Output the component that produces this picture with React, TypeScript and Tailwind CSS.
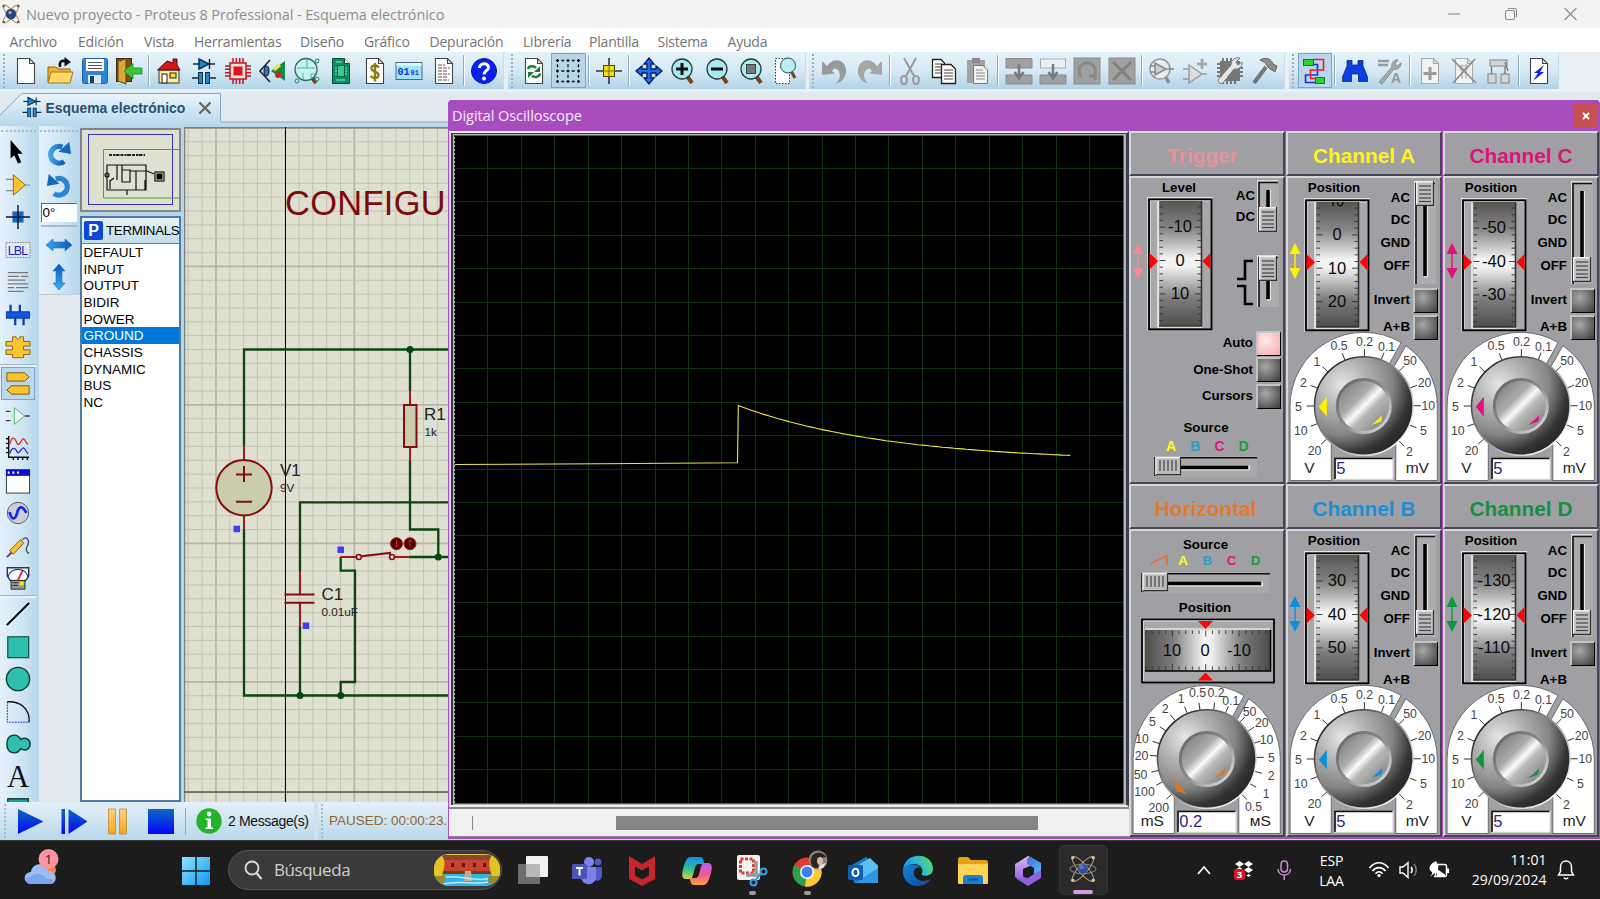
import React from "react";

/* ---------- toolbar icons, drawn on a 28 x 28 grid ---------- */

const Page = ({ fill = "#fff", stroke = "#444" }: { fill?: string; stroke?: string }) => (
  <path d="M5.500 1.500H17.500L22.500 6.500V26.500H5.500ZM17.500 1.500V6.500H22.500" fill={fill} stroke={stroke} strokeWidth="1.1" />
);

const Lens = ({ children }: { children?: React.ReactNode }) => (
  <>
    <path d="M18 19L23 26" stroke="#7a4412" strokeWidth="4" />
    <circle cx="13" cy="12" r="10" fill="#aee9ee" stroke="#1f3d3f" strokeWidth="1.3" />
    {children}
  </>
);

const icons: Record<string, React.ReactNode> = {
  new: <Page />,
  open: (
    <>
      <path d="M2 10H10L12 12H24V25H2Z" fill="#f0b429" stroke="#8a6412" strokeWidth="1" />
      <path d="M5 15H27L24 26H2Z" fill="#ffd766" stroke="#a0761c" strokeWidth="1" />
      <path d="M14 10C13 4 16 3 20 4.500" fill="none" stroke="#111" strokeWidth="2.600" />
      <path d="M18.500 0L25 5L18.500 9.500Z" fill="#111" />
    </>
  ),
  save: (
    <>
      <rect x="1.500" y="1.500" width="25" height="25" rx="2" fill="#2b86d9" stroke="#1a5fa3" />
      <rect x="5" y="2" width="18" height="12" fill="#fff" />
      <path d="M7 5.500H21M7 8.500H21M7 11.500H21" stroke="#555" />
      <rect x="7" y="18" width="13" height="8.500" fill="#dfe9f2" />
      <rect x="9" y="19" width="4" height="7" fill="#1d3f66" />
    </>
  ),
  exit: (
    <>
      <rect x="1.500" y="1.500" width="15" height="23" fill="#7b5518" stroke="#3f2c0a" />
      <path d="M5 4L11 1.500V27L3 24V3Z" fill="#dba53b" stroke="#5e430f" />
      <path d="M27 11V17H18V22L9 14L18 6.500V11Z" fill="#3cc43a" stroke="#1d8a28" strokeWidth=".8" />
    </>
  ),
  home: (
    <>
      <rect x="4" y="13" width="20" height="13" fill="#ffef9a" stroke="#333" />
      <path d="M2.500 13L12 4L18 6V2H22V8L25 13Z" fill="#d3151c" stroke="#5b0a0a" />
      <rect x="7" y="17" width="5" height="9" fill="#fff" stroke="#222" />
      <rect x="15" y="16" width="6" height="5" fill="#f7dd38" stroke="#222" />
    </>
  ),
  schematic: (
    <>
      <path d="M3 7H25" stroke="#223" strokeWidth="1.500" />
      <path d="M9 2V12L19 7ZM19.500 2V12" fill="#1c86d8" stroke="#10304c" strokeWidth="1.500" />
      <path d="M2 21H9M19 21H26" stroke="#223" strokeWidth="1.500" />
      <rect x="8.500" y="15.500" width="4" height="11" fill="#1c86d8" stroke="#10304c" />
      <rect x="15.500" y="15.500" width="4" height="11" fill="#1c86d8" stroke="#10304c" />
    </>
  ),
  chip: (
    <>
      <path d="M9 1V27M12.300 1V27M15.700 1V27M19 1V27M1 9H27M1 12.300H27M1 15.700H27M1 19H27" stroke="#c4161c" strokeWidth="1.500" />
      <rect x="6" y="6" width="16" height="16" fill="#f6dede" stroke="#c4161c" strokeWidth="1.500" />
      <rect x="9.500" y="9.500" width="9" height="9" fill="#d9171d" />
    </>
  ),
  visual: (
    <>
      <path d="M12 3L2 14L12 25" fill="none" stroke="#223" strokeWidth="1.600" />
      <ellipse cx="8.500" cy="14" rx="2.500" ry="5" fill="#2b74b8" stroke="#112" />
      <path d="M27 4V24L13 14Z" fill="#128a45" />
      <path d="M16 13L22 8" stroke="#f0e23a" strokeWidth="3" />
      <circle cx="20" cy="18" r="3" fill="#d92222" />
    </>
  ),
  explorer: (
    <>
      <path d="M18 19L23 26" stroke="#7a4412" strokeWidth="4" />
      <circle cx="13" cy="12.500" r="11" fill="#c9f2ef" stroke="#2d6f68" strokeWidth="1.300" />
      <path d="M4 11H14V3M14 11H22M10 22V16M18 21V17H23" fill="none" stroke="#3fb7a4" />
      <circle cx="24" cy="4" r="2" fill="#bfeee8" stroke="#267d6c" />
      <circle cx="4" cy="24" r="2" fill="#bfeee8" stroke="#267d6c" />
      <circle cx="24" cy="22" r="2" fill="#bfeee8" stroke="#267d6c" />
    </>
  ),
  pcb: (
    <>
      <path d="M5.500 1.500H17.500L22.500 6.500V26.500H5.500Z" fill="#0d8f63" stroke="#0a4a36" />
      <path d="M17.500 1.500V6.500H22.500" fill="#fff" stroke="#333" />
      <rect x="10.500" y="8.500" width="7" height="11" fill="#3ec69a" stroke="#063" />
      <path d="M8 11H10M8 14H10M8 17H10M18 11H20M18 14H20M18 17H20M9 23H18M9 5H15" stroke="#7ff0c9" />
    </>
  ),
  bom: (
    <>
      <Page />
      <path d="M18 10.500C15 7 9.500 8.500 10.500 12C11.500 15.500 18 14 17.500 18.500C17 22 11.500 21.500 9.500 19M14 6V24.500" fill="none" stroke="#8f7a06" strokeWidth="2.300" />
    </>
  ),
  code: (
    <>
      <rect x="1" y="5.500" width="26" height="17" fill="#9fe6f4" stroke="#567" />
      <rect x="1.500" y="6" width="25" height="3" fill="#d7f6fb" />
      <g fontFamily="Liberation Mono, monospace" fontWeight="700" fill="#1033d8">
        <text x="2.500" y="18" fontSize="10">01</text>
        <text x="15.500" y="18" fontSize="7">01</text>
      </g>
    </>
  ),
  notes: (
    <>
      <Page />
      <path d="M8 8H15M8 11H20M8 14H18M8 17H20M8 20H17M8 23H19" stroke="#555" strokeDasharray="4 1" />
    </>
  ),
  help: (
    <>
      <circle cx="14" cy="14" r="12.500" fill="#0b1ff0" stroke="#0a16a0" />
      <path d="M9.500 11C9.500 5.500 18.500 5.500 18.500 10.500C18.500 13.500 14 14 14 17.500" fill="none" stroke="#fff" strokeWidth="3" />
      <circle cx="14" cy="21.500" r="1.900" fill="#fff" />
    </>
  ),
  refresh: (
    <>
      <Page />
      <path d="M8 12C9 8.500 14 8.500 16 11M20 16.500C19 20.500 14 21 12 18.500" fill="none" stroke="#15803a" strokeWidth="2.500" />
      <path d="M20 9V15H14ZM8 21V15H14Z" fill="#15803a" />
    </>
  ),
  grid: (
    <path d="M2 3.500H26M2 14H26M2 24.500H26M3.500 2V26M14 2V26M24.500 2V26" stroke="#111" strokeWidth="1.300" strokeDasharray="3 2.250" />
  ),
  origin: (
    <>
      <path d="M14 1V27M1 14H27" stroke="#333" strokeWidth="1.600" />
      <rect x="8.500" y="8.500" width="11" height="11" fill="#f5dc10" stroke="#4a4200" />
      <path d="M14 8V20M8 14H20" stroke="#7a6b00" />
    </>
  ),
  pan: (
    <path d="M14 1L19 7H16V12H21V9L27 14L21 19V16H16V21H19L14 27L9 21H12V16H7V19L1 14L7 9V12H12V7H9Z" fill="#1673f0" stroke="#0a1660" strokeWidth="1.300" />
  ),
  zoomin: <Lens><path d="M13 6V18M7 12H19" stroke="#111" strokeWidth="3" /></Lens>,
  zoomout: <Lens><path d="M7 12H19" stroke="#111" strokeWidth="3" /></Lens>,
  zoomall: <Lens><rect x="8.500" y="7.500" width="9" height="9" fill="#777" stroke="#444" /></Lens>,
  zoomarea: (
    <>
      <rect x="3.500" y="1.500" width="14" height="25" fill="#fff" stroke="#333" strokeDasharray="1.500 1.500" />
      <path d="M19 14L23 21" stroke="#7a4412" strokeWidth="3" />
      <circle cx="16" cy="8.500" r="7.500" fill="#b6eef2" stroke="#1f4d50" />
    </>
  ),
  undo: <path d="M1 4L6 9C12 0 24 2 25 13C25.500 20 21 25 15 26.500C21 21 20 12 13 11.500L11 14L14 16.500L1 18Z" fill="#9a9a9a" />,
  redo: <path d="M27 4L22 9C16 0 4 2 3 13C2.500 20 7 25 13 26.500C7 21 8 12 15 11.500L17 14L14 16.500L27 18Z" fill="#a6a6a6" />,
  cut: (
    <g fill="none" stroke="#999" strokeWidth="2">
      <path d="M8 1L18 19M20 1L10 19" />
      <ellipse cx="8" cy="23" rx="3" ry="4" />
      <ellipse cx="20" cy="23" rx="3" ry="4" />
    </g>
  ),
  copy: (
    <>
      <path d="M2.500 2.500H11L14.500 6V20.500H2.500Z" fill="#fff" stroke="#222" strokeWidth="1.300" />
      <path d="M5 7H12M5 10H12M5 13H12M5 16H12" stroke="#444" />
      <path d="M11.500 7.500H21L25.500 12V26.500H11.500Z" fill="#fff" stroke="#222" strokeWidth="1.300" />
      <path d="M14 13H23M14 16H23M14 19H23M14 22H23" stroke="#444" />
    </>
  ),
  paste: (
    <>
      <rect x="3" y="3" width="18" height="23" fill="#a3a3a3" />
      <rect x="8" y="1" width="8" height="5" fill="#8a8a8a" />
      <path d="M9.500 8.500H19L23.500 13V26.500H9.500Z" fill="#f2f2f2" stroke="#777" />
      <path d="M12 13H19M12 16H21M12 19H21M12 22H21" stroke="#888" />
    </>
  ),
  blockcopy: (
    <>
      <path d="M1 1.500H27V11H1ZM1 18H27V27H1Z" fill="#a0a0a0" stroke="#8c8c8c" />
      <path d="M14 7V20M9.500 15L14 21L18.500 15" stroke="#7a7a7a" strokeWidth="2.600" fill="none" />
    </>
  ),
  blockmove: (
    <>
      <rect x="1.500" y="2" width="25" height="9" fill="#e9f1f7" stroke="#aaa" />
      <path d="M1 18H27V27H1Z" fill="#a0a0a0" stroke="#8c8c8c" />
      <path d="M14 7V20M9.500 15L14 21L18.500 15" stroke="#7a7a7a" strokeWidth="2.600" fill="none" />
    </>
  ),
  blockrotate: (
    <>
      <rect x="1" y="1" width="26" height="26" fill="#a0a0a0" stroke="#8c8c8c" />
      <path d="M8 20C2 8 14 2 20 8C24 13 22 18 20 20M16 19H22V23" fill="none" stroke="#888" strokeWidth="3" />
    </>
  ),
  blockdelete: (
    <>
      <rect x="1" y="1" width="26" height="26" fill="#a0a0a0" stroke="#8c8c8c" />
      <path d="M5 5L23 23M23 5L5 23" stroke="#808080" strokeWidth="3" />
    </>
  ),
  pick: (
    <>
      <path d="M17 19L21 26" stroke="#8a8a8a" strokeWidth="3.500" />
      <circle cx="12" cy="12" r="10" fill="#e9edf0" stroke="#999" strokeWidth="1.500" />
      <path d="M7 6V18L18 12ZM2 9H7M2 15H7M18 12H26" fill="#ccc" stroke="#888" strokeWidth="1.500" />
    </>
  ),
  make: (
    <>
      <path d="M7 8V26L20 17ZM1 12H7M1 22H7M20 17H25" fill="#ddd" stroke="#999" strokeWidth="1.400" />
      <path d="M20 2V12M15 7H25" stroke="#aaa" strokeWidth="3" />
    </>
  ),
  package: (
    <>
      <rect x="4" y="4" width="20" height="20" fill="#777" />
      <path d="M7 1V4M11 1V4M15 1V4M19 1V4M7 24V27M11 24V27M15 24V27M19 24V27M1 7H4M1 11H4M1 15H4M1 19H4M24 11H27M24 15H27M24 19H27" stroke="#555" strokeWidth="1.500" />
      <path d="M2 23L15 8C15 2 20 0 24 1L20 5L22 8L26 5C27 10 22 13 18 12L7 26Q3 28 2 23Z" fill="#e6e6e6" stroke="#777" />
    </>
  ),
  hammer: (
    <>
      <path d="M3 26L15 10" stroke="#777" strokeWidth="4" />
      <path d="M9 3C14 0 20 1 22 7L26 9L24 15L19 12L16 9C15 5 12 5 9 3Z" fill="#8c8c8c" stroke="#666" />
    </>
  ),
  autoroute: (
    <>
      <path d="M12 7.500H16.500V18H4.500V25.500H16" fill="none" stroke="#1d2be0" strokeWidth="1.600" />
      <path d="M12 2.500H22.500V13H9.500V21.500H16" fill="none" stroke="#f2182c" strokeWidth="1.600" />
      <rect x="2.500" y="2.500" width="10" height="6" fill="#28d42e" stroke="#173" />
      <rect x="14.500" y="20.500" width="9" height="6" fill="#28d42e" stroke="#173" />
    </>
  ),
  find: (
    <path d="M1.500 24.500V20L6 9V3.500H11V8H17V3.500H22V9L26.500 20V24.500H17.500V17H10.500V24.500Z" fill="#0c3fe0" stroke="#0b257a" strokeWidth=".8" />
  ),
  props: (
    <>
      <path d="M2 4H13M2 8H12" stroke="#9a9a9a" strokeWidth="2.500" />
      <path d="M3 25L16 10C15 5 19 2 22 3L19 7L21 9L25 6C25 11 21 13 18 12L6 27Z" fill="#aaa" stroke="#8b8b8b" />
      <text x="15" y="26" fontSize="14" fontWeight="700" fontFamily="Liberation Sans, sans-serif" fill="#999">A</text>
    </>
  ),
  addsheet: (
    <>
      <Page fill="#f2f2f2" stroke="#aaa" />
      <path d="M14 10V23M7.500 16.500H20.500" stroke="#9a9a9a" strokeWidth="3" />
    </>
  ),
  delsheet: (
    <>
      <Page fill="#f2f2f2" stroke="#aaa" />
      <path d="M9 9H18M9 12H18M12 7V22M16 7V22" stroke="#aaa" />
      <path d="M2 2L26 26M25 2L3 26" stroke="#888" strokeWidth="1.600" />
    </>
  ),
  sheets: (
    <g fill="#d5d5d5" stroke="#999" strokeWidth="1.300">
      <rect x="5" y="3" width="17" height="6" />
      <rect x="3" y="17" width="8" height="9" />
      <rect x="16" y="17" width="8" height="9" />
      <path d="M6.500 17V9.500M20 17V9.500M20 5L23 14" fill="none" stroke="#777" />
    </g>
  ),
  erc: (
    <>
      <Page />
      <path d="M19 8L9 16H13L8 24L19 15H15Z" fill="#1420e8" />
    </>
  ),
};

const Slot = ({ name, active }: { name: string; active?: boolean }) => (
  <div className={"flex h-[35px] w-[34.3px] shrink-0 items-center justify-center " + (active ? "border border-[#7aa5c8] bg-[#b9d7ea]" : "")}>
    <svg width="28" height="28" viewBox="0 0 28 28" className="shrink-0">{icons[name]}</svg>
  </div>
);

const Band = ({ items, cls, active }: { items: string; cls: string; active?: string }) => (
  <div className={"flex h-[37px] items-center border-r border-[#c9dcea] bg-linear-to-b from-[#e6f2f9] via-[#d6eaf5] to-[#b2d3e8] " + cls}>
    <div className="ml-[3px] h-[34px] w-0 border-l-2 border-dotted border-[#9fb0bd]" />
    <div className="w-[4px] shrink-0" />
    {items.split(" ").map((n, i) =>
      n === "|" ? (
        <div key={i} className="flex w-[6px] shrink-0 justify-center"><div className="h-[31px] w-[2px] border-l border-[#93abbc] bg-white" /></div>
      ) : (
        <Slot key={i} name={n} active={n === active} />
      ),
    )}
  </div>
);

const Atom = ({ size, dark }: { size: number; dark?: boolean }) => (
  <svg width={size} height={size} viewBox="0 0 30 30">
    <g fill="none" stroke={dark ? "#b9a47c" : "#b08a4a"} strokeWidth={dark ? 1 : 1.500}>
      <ellipse cx="15" cy="15" rx="17" ry="5" transform="rotate(50 15 15)" />
      <ellipse cx="15" cy="15" rx="17" ry="5" transform="rotate(-50 15 15)" />
      {dark && <ellipse cx="15" cy="15" rx="14" ry="5" stroke="#8b8fa8" />}
    </g>
    <circle cx="15" cy="15" r={dark ? 5 : 8} fill={dark ? "#2b4f9c" : "#26467e"} />
    <circle cx="13.500" cy="13" r="2.500" fill={dark ? "#4f78c4" : "#8fb0e0"} />
    <g fill={dark ? "#d9c48a" : "#5d5238"}>
      <circle cx="4" cy="3" r="1.800" /><circle cx="26" cy="3" r="1.800" /><circle cx="4" cy="27" r="1.800" /><circle cx="26" cy="27" r="1.800" />
    </g>
  </svg>
);

/* ---------- mode selector on the left ---------- */

const modes: React.ReactNode[] = [
  <path d="M6 1L19 16H13.500L17.500 25L14 26.500L10 17.500L6 21Z" fill="#000" />,
  <><path d="M1 8H9M1 20H9M20 14H27" stroke="#888" strokeWidth="1.300" /><path d="M9 3V25L22 14Z" fill="#fdc32d" stroke="#8a6a16" /></>,
  <><rect x="8" y="8" width="12" height="12" fill="#0f6cc4" /><path d="M14 1V27M1 14H27" stroke="#112" strokeWidth="1.500" /></>,
  <><rect x="1" y="6" width="26" height="16" fill="#dcebf7" stroke="#888" strokeDasharray="2 1" /><text x="3" y="19" fontSize="13.500" textLength="22" fontFamily="Liberation Sans, sans-serif" fill="#1a1ac8">LBL</text></>,
  <path d="M3 4H25M3 8H15M17 8H25M3 12H22M3 16H25M3 20H10M12 20H25M3 24H20" stroke="#777" strokeWidth="1.300" />,
  <><path d="M1.500 10.500H26.500V17.500H1.500Z" fill="#0f55e0" stroke="#093a9c" /><path d="M6 3V11M16 3V11M11 17V25M20 17V25" stroke="#0d3fb0" strokeWidth="2.500" /></>,
  <path d="M8 3H12C12 6 16 6 16 3H20V8H27V13H20V17H27V22H20V25.500H8V22H1V17H8V13H1V8H8Z" fill="#fdc32d" stroke="#7d6218" />,
  <><path d="M2 3H21L26 7.500L21 12H2Z" fill="#fdc32d" stroke="#6d5514" /><path d="M26 17H7L2 21.500L7 26H26Z" fill="#fdc32d" stroke="#6d5514" /></>,
  <><path d="M1 9H6M1 19H6M21 14H27" stroke="#444" strokeWidth="1.500" /><path d="M10 5V23L21 14Z" fill="#eaf6f2" stroke="#4db46c" /></>,
  <><path d="M4 1V24H26M1 4H4M1 9H4M1 14H4M1 19H4M9 24V27M14 24V27M19 24V27M24 24V27" fill="none" stroke="#111" strokeWidth="1.500" /><path d="M5 10C8 -1 11 4 13 9C15 14 18 3 20 4C22 5 22 9 25 10" fill="none" stroke="#e02626" strokeWidth="1.400" /><path d="M5 20C8 12 11 14 13 18C15 22 18 13 20 14C22 15 23 19 25 20" fill="none" stroke="#2222d8" strokeWidth="1.400" /></>,
  <><rect x="1.500" y="2" width="25" height="25" fill="#fff" stroke="#333" /><rect x="1" y="1.500" width="26" height="7" fill="#0a12c8" /><path d="M3 5H5M8 5H10M13 5H15" stroke="#fff" strokeWidth="2.500" /></>,
  <><circle cx="14" cy="14" r="11.500" fill="#ccd0d8" stroke="#555" /><path d="M5 13C7 22 11 22 13 14C15 6 19 6 23 14" fill="none" stroke="#1428e8" strokeWidth="3" /></>,
  <><path d="M2 26L7 21" stroke="#555" strokeWidth="2" /><path d="M5 19L17 7L20 11L9 23Z" fill="#fdc32d" stroke="#6d5514" /><path d="M19 7C24 2 27 9 24 14C22 18 23 21 26 22" fill="none" stroke="#444" strokeWidth="1.300" /></>,
  <><path d="M2.500 3H25.500V12L22 17H6L2.500 12Z" fill="#fff" stroke="#333" strokeWidth="1.500" /><path d="M3 13C6 2 22 2 25 13" fill="none" stroke="#2030e0" strokeWidth="1.500" /><path d="M14 16L19 6" stroke="#e02020" strokeWidth="2" /><rect x="6.500" y="16.500" width="15" height="9.500" fill="#999" stroke="#222" /><path d="M8 19H14M8 22H14" stroke="#222" /><rect x="16" y="18" width="4" height="4" fill="#f5e42a" /></>,
  <path d="M2 26L26 2" stroke="#000" strokeWidth="2.200" />,
  <rect x="3" y="3" width="22.500" height="22.500" fill="#2fbfb0" stroke="#134d47" strokeWidth="1.300" />,
  <circle cx="14" cy="14" r="12.500" fill="#2fbfb0" stroke="#0e3a36" strokeWidth="1.500" />,
  <><path d="M2.500 3V25H26" fill="none" stroke="#2222d0" strokeDasharray="2 1" /><path d="M2.500 3C16 2 27 10 26 25" fill="none" stroke="#111" strokeWidth="1.500" /></>,
  <path d="M17 9C22 6 27 9 27 14C27 20 22 22 17 19C13 26 2 25 2 14C2 3 13 2 17 9Z" fill="#2fbfb0" stroke="#0e3a36" strokeWidth="1.500" />,
  <text x="14" y="25" textAnchor="middle" fontSize="33" fontFamily="Liberation Serif, serif" fill="#111">A</text>,
  <><rect x="3" y="3" width="22" height="22" fill="#17a58e" stroke="#0e3a36" strokeWidth="1.500" /><path d="M8 8H20" stroke="#063" strokeWidth="1.500" /></>,
];

const ModeBar = () => (
  <div className="flex w-[39px] shrink-0 flex-col items-center overflow-hidden bg-linear-to-r from-[#e4f1fa] via-[#d2e7f4] to-[#b4d6ec] pr-[3px]">
    <div className="mt-[4px] mb-[4px] w-[35px] border-t-2 border-dotted border-[#a9bccb]" />
    {modes.map((m, i) => (
      <React.Fragment key={i}>
        {(i === 7 || i === 14) && <div className="h-[3.500px] w-full shrink-0 border-t border-[#9fb3c3] bg-[#e8f2f9]" />}
        <div className={"flex h-[32.500px] w-[34px] shrink-0 items-center justify-center " + (i === 7 ? "border border-[#7aa5c8] bg-[#bcd9ec]" : "")}>
          <svg width="26" height="26" viewBox="0 0 28 28" className="overflow-visible">{m}</svg>
        </div>
      </React.Fragment>
    ))}
  </div>
);

const RotateBar = () => (
  <div className="flex w-[41px] shrink-0 flex-col bg-[#e1e9ef]">
    <div className="flex h-[169px] flex-col items-center border-b border-[#c2cfd9] bg-linear-to-r from-[#e4f1fa] via-[#d2e7f4] to-[#b4d6ec] pr-[2px]">
      <div className="mt-[4px] w-[38px] border-t-2 border-dotted border-[#a9bccb]" />
      <svg width="26" height="26" viewBox="0 0 28 28" className="mt-[9px]">
        <defs><linearGradient id="rot"><stop offset="0" stopColor="#3aa4e4" /><stop offset="1" stopColor="#0f5ab8" /></linearGradient></defs>
        <path d="M17.500 6.500A9 9 0 1 0 19.500 22" fill="none" stroke="url(#rot)" strokeWidth="5.500" />
        <path d="M25 1L27 14L13.500 11.500Z" fill="#1668bd" />
      </svg>
      <svg width="26" height="26" viewBox="0 0 28 28" className="mt-[6px]">
        <path d="M10.500 6.500A9 9 0 1 1 8.500 22" fill="none" stroke="#2c86d4" strokeWidth="5.500" />
        <path d="M3 1L1 14L14.500 11.500Z" fill="#1668bd" />
      </svg>
      <div className="mt-[4px] h-[19px] w-[36px] border-t border-l border-[#666] bg-white pl-px font-['Liberation_Sans'] text-[13.500px] leading-[18px] text-black">0°</div>
      <div className="mt-[3px] h-[2px] w-[36px] bg-[#a9bccb]" />
      <svg width="28" height="28" viewBox="0 0 28 28" className="mt-[4px]">
        <defs><linearGradient id="hr"><stop offset="0" stopColor="#35a8e8" /><stop offset="1" stopColor="#0d55c0" /></linearGradient></defs>
        <path d="M1 14L8 8V11H20V8L27 14L20 20V17H8V20Z" fill="url(#hr)" stroke="#1565b0" strokeWidth=".5" />
      </svg>
      <svg width="28" height="28" viewBox="0 0 28 28" className="mt-[4px]">
        <defs><linearGradient id="vr" x1="0" y1="0" x2="0" y2="1"><stop offset="0" stopColor="#0d55c0" /><stop offset="1" stopColor="#3fb0ec" /></linearGradient></defs>
        <path d="M14 1L20 8H17V20H20L14 27L8 20H11V8H8Z" fill="url(#vr)" stroke="#1565b0" strokeWidth=".5" />
      </svg>
    </div>
  </div>
);

const terminals = ["DEFAULT", "INPUT", "OUTPUT", "BIDIR", "POWER", "GROUND", "CHASSIS", "DYNAMIC", "BUS", "NC"];

const Picker = () => (
  <div className="flex w-[104px] shrink-0 flex-col bg-[#b7d6ea] pr-[3px]">
    <div className="mt-[2px] h-[84px] border-2 border-[#7d8790] bg-[#dfe0d0]">
      <svg width="97" height="80" viewBox="82 130 97 80">
        <rect x="88.500" y="134.500" width="84" height="70" fill="none" stroke="#3a32b8" />
        <path d="M180 149.500H103.500V198H180" fill="none" stroke="#35b035" />
        <path d="M109 155H145" stroke="#222" strokeWidth="2" strokeDasharray="3 1 2 .5 4 1" />
        <g fill="none" stroke="#111" strokeWidth="1.200">
          <path d="M107 165H146V190H107ZM110 180V189M117 165V180M122 165V175M127 170H130V182H122V170ZM130 171H147L154 174M136 171V190M145 180V190M127 190V195M110 181L114 178" />
          <circle cx="107" cy="175" r="2" />
          <rect x="155" y="172" width="9" height="9" />
        </g>
        <rect x="156.500" y="173.500" width="6" height="6" fill="#000" />
      </svg>
    </div>
    <div className="mt-[4px] flex flex-1 flex-col border-2 border-[#4d7ba3] bg-white">
      <div className="flex h-[26px] shrink-0 items-center overflow-hidden border-b border-[#4b8fc9] bg-linear-to-b from-[#e6f2fa] to-[#bfdcee]">
        <div className="ml-[2px] flex h-[19px] w-[19px] shrink-0 items-center justify-center rounded-[2px] bg-[#0c47d8] font-['Liberation_Sans'] text-[16px] font-bold text-white">P</div>
        <div className="ml-[3px] font-['Liberation_Sans'] text-[13.300px] tracking-[-0.300px] text-black">TERMINALS</div>
      </div>
      {terminals.map((t) => (
        <div key={t} className={"h-[16.670px] shrink-0 pl-[1.500px] font-['Liberation_Sans'] text-[13.500px] leading-[17px] " + (t === "GROUND" ? "bg-[#0078d7] text-white" : "text-black")}>{t}</div>
      ))}
    </div>
  </div>
);

/* ---------- schematic ---------- */

const Schematic = () => {
  const xs = Array.from({ length: 20 }, (_, i) => 188.300 + i * 13.840);
  const ys = Array.from({ length: 50 }, (_, i) => 127.900 + i * 13.850);
  return (
    <svg width="264" height="677" viewBox="184 126 264 677" className="shrink-0 bg-[#dfe0d0]">
      {xs.map((x, i) => <path key={i} d={`M${x} 126V803`} stroke={i % 10 === 2 ? "#b3b4a2" : "#c3c4b5"} strokeWidth={i % 10 === 2 ? 1.700 : 1} />)}
      {ys.map((y, i) => <path key={i} d={`M184 ${y}H448`} stroke={i % 10 === 0 ? "#b3b4a2" : "#c3c4b5"} strokeWidth={i % 10 === 0 ? 1.700 : 1} />)}
      <path d="M184 126.500H448" stroke="#b9d6e8" strokeWidth="1.500" />
      <path d="M184 127.800H448M184.500 127V803" stroke="#7b7f86" strokeWidth="1.500" />
      <path d="M184 792H448" stroke="#55554c" strokeWidth="1.300" />
      <path d="M285.500 127V802" stroke="#000" />
      <text x="285" y="215.300" fontSize="34.400" letterSpacing=".35" fill="#7f0a0a" fontFamily="Liberation Sans, sans-serif">CONFIGU</text>
      <g fill="none" stroke="#0a470f" strokeWidth="2.300">
        <path d="M244 446V349.500H448M410 349.500V391M410 460V529.500H438.300V557M448 557H409M244 529V695.500H448M448 502.300H300V571M300 627V695.500M340.700 557V570.700H355V682H340.700V695.500" />
      </g>
      <g fill="#0a470f">
        <circle cx="410" cy="349.500" r="3.500" /><circle cx="438.300" cy="557" r="3.500" /><circle cx="300" cy="695.500" r="3.500" /><circle cx="340.700" cy="695.500" r="3.500" />
      </g>
      <g fill="none" stroke="#840c0c" strokeWidth="2">
        <path d="M244 445V460M244 515V530M410 391V405M410 447V461M300 571V594M300 603V627M340.700 557H356M395 557H410" stroke="#a31818" />
        <rect x="404" y="405" width="12.500" height="42" fill="#cbccae" />
        <circle cx="244" cy="487.700" r="27.700" fill="#cbccae" />
        <path d="M236 474.500H252M244 466V482M236 501.700H252M284.500 594.500H314.500M284.500 602.700H314.500M361.500 556.300L391 552.800M390 552.500V555" />
        <circle cx="358.800" cy="557" r="2.500" fill="#dfe0d0" strokeWidth="1.500" />
        <circle cx="392" cy="557" r="2.500" fill="#dfe0d0" strokeWidth="1.500" />
      </g>
      <circle cx="396.500" cy="543.700" r="6" fill="#4a0505" stroke="#b01414" />
      <circle cx="410" cy="543.700" r="6" fill="#4a0505" stroke="#b01414" />
      <path d="M396.500 540V547M394.500 545L396.500 547L398.500 545M410 547V540M408 542L410 540L412 542" stroke="#e02020" fill="none" />
      <path d="M233.500 525.800H240V532.300H233.500ZM337.500 546.500H344V553H337.500ZM302.700 622.500H309.200V629H302.700Z" fill="#4040f0" />
      <g fontFamily="Liberation Sans, sans-serif" fill="#222">
        <text x="280" y="475.500" fontSize="17">V1</text>
        <text x="280" y="491.500" fontSize="11.700">9V</text>
        <text x="424" y="420" fontSize="17">R1</text>
        <text x="424.500" y="436" fontSize="11.700">1k</text>
        <text x="321.500" y="599.500" fontSize="17">C1</text>
        <text x="321.500" y="616" fontSize="11.700">0.01uF</text>
      </g>
    </svg>
  );
};

/* ---------- oscilloscope controls ---------- */

const label = "font-['Liberation_Sans'] text-[13.300px] font-bold text-black whitespace-nowrap";

const Arrows = ({ color }: { color: string }) => (
  <svg width="12" height="36" viewBox="0 0 12 36" className="mt-[65px] ml-[1px] shrink-0">
    <path d="M6 10V26" stroke={color} strokeWidth="1.400" />
    <path d="M6 0L11.500 11H.5ZM6 36L11.500 25H.5Z" fill={color} />
  </svg>
);

const Wheel = ({ values, shift = 0, id }: { values: string[]; shift?: number; id: string }) => (
  <svg width="66" height="134" viewBox="0 0 66 134" className="shrink-0">
    <defs>
      <linearGradient id={id} x1="0" y1="0" x2="0" y2="1">
        <stop offset="0" stopColor="#585454" /><stop offset=".22" stopColor="#858585" /><stop offset=".46" stopColor="#f4f4f4" /><stop offset=".53" stopColor="#f0f0f0" /><stop offset=".78" stopColor="#7c7c7c" /><stop offset="1" stopColor="#504c4c" />
      </linearGradient>
      <clipPath id={id + "c"}><rect x="12" y="4" width="43" height="125" /></clipPath>
    </defs>
    <path d="M0 134V.7H66" fill="none" stroke="#e4e4e4" strokeWidth="1.400" />
    <rect x="2" y="2.300" width="62.500" height="130" fill="#a8a8aa" stroke="#000" strokeWidth="1.800" />
    <path d="M3.500 131V4H63" fill="none" stroke="#c9c9c9" />
    <path d="M11 4V130H55" fill="none" stroke="#e0e0e0" strokeWidth="2" />
    <rect x="12.300" y="4" width="42.500" height="125" fill={`url(#${id})`} />
    <path d="M54.500 4V129M12 129H55" stroke="#333" strokeWidth="1.600" />
    <g clipPath={`url(#${id}c)`}>
      {Array.from({ length: 22 }, (_, i) => {
        const y = 63.500 + shift + (i - 10) * 6.680;
        const w = i % 5 === 0 ? 6 : 3.500;
        return <path key={i} d={`M12.500 ${y}h${w}M54 ${y}h${-w}`} stroke="#333" strokeWidth=".9" />;
      })}
      {values.map((v, i) => (
        <text key={v + i} x="33" y={68.800 + shift + (i - 1) * 33.400} fontSize="16.500" textAnchor="middle" fontFamily="Liberation Sans, sans-serif" fill="#0a0a0a">{v}</text>
      ))}
      {shift > 0 && <path d="M29 4V8.300M33.500 4C33.500 9 39 9 39 4" fill="none" stroke="#111" strokeWidth="1.400" />}
    </g>
    <path d="M2.500 56V72.500L11 64.300ZM63.500 56V72.500L55.500 64.300Z" fill="#fb0606" />
  </svg>
);

const VSlider = ({ h, at }: { h: number; at: number }) => (
  <svg width="22" height={h} viewBox={`0 0 22 ${h}`} className="shrink-0">
    <rect width="22" height={h} fill="#acacae" />
    <path d={`M.7 ${h}V.7H21`} fill="none" stroke="#dcdcdc" strokeWidth="1.400" />
    <path d={`M2 ${h}V2.500H21`} fill="none" stroke="#111" strokeWidth="1.600" />
    <path d={`M11 10V${h - 8}`} stroke="#000" strokeWidth="3.500" />
    <path d={`M13.500 10V${h - 7}H10`} fill="none" stroke="#e8e8e8" />
    <rect x="2" y={at} width="18" height="25" fill="#bcbcbe" />
    <path d={`M2.700 ${at + 25}V${at + .7}H20`} fill="none" stroke="#f0f0f0" strokeWidth="1.400" />
    <path d={`M2 ${at + 24.300}H19.500V${at}`} fill="none" stroke="#333" strokeWidth="1.200" />
    {[5, 9, 13, 17, 20.500].map((d) => <path key={d} d={`M5 ${at + d}h12`} stroke="#444" strokeWidth="1.200" />)}
  </svg>
);

const HSlider = ({ w }: { w: number }) => (
  <svg width={w} height="21" viewBox={`0 0 ${w} 21`} className="block shrink-0">
    <rect width={w} height="21" fill="#a8a8aa" />
    <path d={`M1 20V1.700H${w}`} fill="none" stroke="#111" strokeWidth="1.600" />
    <path d={`M20 11.500H${w - 9}`} stroke="#000" strokeWidth="3.500" />
    <path d={`M20 14H${w - 7.500}V9`} fill="none" stroke="#e8e8e8" />
    <rect x="1.500" y="1" width="25" height="18" fill="#bcbcbe" />
    <path d="M2 19V1.500H26" fill="none" stroke="#f0f0f0" strokeWidth="1.400" />
    <path d="M2 18.700H26.500V1" fill="none" stroke="#333" strokeWidth="1.200" />
    {[6, 10, 14, 18, 22].map((d) => <path key={d} d={`M${d} 4v11`} stroke="#444" strokeWidth="1.200" />)}
  </svg>
);

const Push = ({ on }: { on?: boolean }) => (
  <div className={"h-[25px] w-[25px] shrink-0 border-t-2 border-r-[1.500px] border-b-[1.500px] border-l-2 border-t-[#c4c4c4] border-r-black border-b-black border-l-[#c4c4c4] bg-radial-[at_35%_35%] " + (on ? "from-[#fdeaea] to-[#f5a9ab]" : "from-[#a8a8a8] to-[#3a3a3a]")} />
);

const PushRow = ({ text, on, cls = "" }: { text: string; on?: boolean | null; cls?: string }) => (
  <div className={"flex items-center justify-end gap-[3px] " + cls}>
    <span className={label}>{text}</span>
    {on === null ? <div className="w-[25px] shrink-0" /> : <Push on={on} />}
  </div>
);

type Mark = [string, number, number];

const voltMarks: Mark[] = [
  ["0.5", -24.700, -60.300], ["0.2", 0.700, -65], ["0.1", 22.700, -60], ["1", -47, -44.700], ["2", -60.300, -23.300], ["5", -65.300, 0], ["10", -63, 24], ["20", -49.300, 44],
  ["50", 46.300, -45.700], ["20", 60.800, -23.700], ["10", 64.500, -0.300], ["5", 59.700, 24.700], ["2", 45.700, 45.300],
];

const timeMarks: Mark[] = [
  ["0.5", -9.300, -66.700], ["0.2", 9.300, -66.700], ["0.1", 24, -58.700], ["1", -25.700, -60.300], ["2", -41.700, -50.700], ["5", -54.300, -37.300], ["10", -64.700, -21], ["20", -65.300, -4], ["50", -66.300, 15.700], ["100", -62.300, 32.300], ["200", -48, 48],
  ["50", 42.700, -47.300], ["20", 55, -37], ["10", 59.700, -20], ["5", 64.700, -2], ["2", 64.300, 16.700], ["1", 59.300, 34], ["0.5", 46.700, 47.300],
];

const Dial = ({ marks, color, value, left, right, pointer, id }: { marks: Mark[]; color: string; value: string; left: string; right: string; pointer: string; id: string }) => (
  <svg width="153" height="151" viewBox="-75.800 -75 153 151" className="block shrink-0">
    <defs>
      <radialGradient id={id + "k"} cx=".28" cy=".28" r=".85">
        <stop offset="0" stopColor="#e6e6e6" /><stop offset=".3" stopColor="#b2b2b2" /><stop offset=".6" stopColor="#858585" /><stop offset=".82" stopColor="#333" /><stop offset="1" stopColor="#222" />
      </radialGradient>
      <linearGradient id={id + "i"} x1="0" y1="0" x2="1" y2="1">
        <stop offset=".1" stopColor="#808080" /><stop offset=".38" stopColor="#ababab" /><stop offset=".5" stopColor="#fafafa" /><stop offset=".6" stopColor="#b8b8b8" /><stop offset=".8" stopColor="#949494" /><stop offset="1" stopColor="#777" />
      </linearGradient>
      <linearGradient id={id + "r"} x1="0" y1="0" x2="1" y2="1">
        <stop offset=".1" stopColor="#1a1a1a" /><stop offset=".5" stopColor="#999" /><stop offset=".9" stopColor="#fff" />
      </linearGradient>
      <linearGradient id={id + "n"} x1="0" y1="0" x2="1" y2="1">
        <stop offset=".1" stopColor="#6a6a6a" /><stop offset=".5" stopColor="#8c8c8c" /><stop offset=".9" stopColor="#d4d4d4" />
      </linearGradient>
    </defs>
    <path d="M0 0L-32.500 38V74.500H-73.700V0A73.700 73.700 0 0 1 37.300 -63.500L26 -43Z" fill="#fff" stroke="#555" strokeWidth=".8" />
    <path d="M0 0L31.500 -41.500L42 -60.300A73.700 73.700 0 0 1 73.500 0V74.500H32V38Z" fill="#fff" stroke="#555" strokeWidth=".8" />
    {marks.map(([, x, y], i) => {
      const r = Math.hypot(x, y);
      return <path key={"t" + i} d={`M${(x / r) * 48} ${(y / r) * 48}L${(x / r) * 57} ${(y / r) * 57}`} stroke="#333" />;
    })}
    <g fontFamily="Liberation Sans, sans-serif" fill="#444" fontSize="12.300" textAnchor="middle">
      {marks.map(([t, x, y], i) => <text key={i} x={x} y={y + 4.500}>{t}</text>)}
    </g>
    <circle r="49.300" fill={`url(#${id}k)`} stroke={`url(#${id}r)`} strokeWidth="1.500" />
    <circle r="26.500" fill={`url(#${id}i)`} stroke={`url(#${id}n)`} strokeWidth="3" />
    <path d={pointer} fill={color} />
    <path d="M18.500 9L17.500 15.500L7.500 19L13 14.500Z" fill={color} />
    <rect x="-29.500" y="51.500" width="59" height="22" fill="#fff" />
    <path d="M-28.800 73V52.300H29" fill="none" stroke="#111" strokeWidth="1.700" />
    <path d="M-29 73.300H29.200V52" fill="none" stroke="#d6d6d6" />
    <g fontFamily="Liberation Sans, sans-serif" fill="#222" fontSize="15.500">
      <text x="-27.500" y="67.500" fontSize="16.500" fill="#2c2486">{value}</text>
      <text x="-54.500" y="66.500" textAnchor="middle">{left}</text>
      <text x="53.500" y="66.500" textAnchor="middle">{right}</text>
    </g>
  </svg>
);

const bevel = "border-t-2 border-l-2 border-r-2 border-b-2 border-t-[#d6d8d6] border-l-[#d6d8d6] border-r-[#45455a] border-b-[#45455a] bg-[#a0a0a4]";

const Section = ({ title, color, children }: { title: string; color: string; children: React.ReactNode }) => (
  <div className="flex h-[353px] w-[157px] flex-col pr-px">
    <div className={"flex h-[44.500px] shrink-0 items-center justify-center pt-[4px] font-['Liberation_Sans'] text-[20.800px] font-bold " + bevel}>
      <span className={color}>{title}</span>
    </div>
    <div className={"flex min-h-0 flex-1 flex-col " + bevel}>{children}</div>
  </div>
);

const Channel = ({ name, color, text, values, shift, at, paired }: { name: string; color: string; text: string; values: string[]; shift?: number; at: number; paired?: boolean }) => (
  <Section title={"Channel " + name} color={text}>
    <div className="flex h-[153.500px] shrink-0">
      <div className="w-[16px] shrink-0"><Arrows color={color} /></div>
      <div className="flex w-[66px] shrink-0 flex-col">
        <div className={"h-[20px] pr-[6px] text-center leading-[20px] " + label}>Position</div>
        <Wheel id={"w" + name} values={values} shift={shift} />
      </div>
      <div className="flex w-[68px] shrink-0 flex-col">
        <div className="flex h-[110px] shrink-0 justify-end gap-[4px] pt-[3px] pr-[2px]">
          <div className={"flex flex-col pt-[6px] text-right leading-[22.700px] " + label}>
            <span>AC</span><span>DC</span><span>GND</span><span>OFF</span>
          </div>
          <VSlider h={103} at={at} />
        </div>
        <PushRow text="Invert" cls="h-[25px] shrink-0" />
        <PushRow text="A+B" on={paired ? false : null} cls="mt-[2px] h-[25px] shrink-0" />
      </div>
    </div>
    <Dial id={"d" + name} marks={voltMarks} color={color} value="5" left="V" right="mV" pointer="M-45 .7L-37 -9.300V10.700Z" />
  </Section>
);

const sourceLetters = (
  <>
    <span className="w-[24.200px] text-center text-[#ffff00]">A</span>
    <span className="w-[24.200px] text-center text-[#2a9fc4]">B</span>
    <span className="w-[24.200px] text-center text-[#e0157c]">C</span>
    <span className="w-[24.200px] text-center text-[#1a9e3c]">D</span>
  </>
);

const Trigger = () => (
  <Section title="Trigger" color="text-[#e8929c] pr-[9px]">
    <div className="flex h-[153px] shrink-0">
      <div className="w-[16px] shrink-0"><Arrows color="#ee8d97" /></div>
      <div className="flex w-[66px] shrink-0 flex-col">
        <div className={"h-[20px] pr-[2px] text-center leading-[19px] " + label}>Level</div>
        <Wheel id="wt" values={["-10", "0", "10"]} />
      </div>
      <div className="flex w-[69px] shrink-0 flex-col">
        <div className="flex shrink-0 justify-end gap-[2px] pt-[2px] pr-[3px]">
          <div className={"flex flex-col pt-[5px] text-right leading-[21.500px] " + label}><span>AC</span><span>DC</span></div>
          <VSlider h={52} at={27} />
        </div>
        <div className="mt-[23px] flex shrink-0 justify-end gap-[2px] pr-[3px]">
          <svg width="18" height="52" viewBox="0 0 18 52">
            <path d="M0 24H8V6H16M0 31H8V49H16" fill="none" stroke="#000" strokeWidth="2.600" />
          </svg>
          <VSlider h={52} at={1} />
        </div>
      </div>
    </div>
    <div className="flex flex-col gap-[1.500px] pr-[2px]">
      <PushRow text="Auto" on cls="h-[25px]" />
      <PushRow text="One-Shot" cls="h-[25px]" />
      <PushRow text="Cursors" cls="h-[25px]" />
    </div>
    <div className={"mt-[9px] h-[20px] pr-[2px] text-center leading-[20px] " + label}>Source</div>
    <div className={"flex h-[18px] pl-[28px] text-[14px] leading-[17px] " + label}>{sourceLetters}</div>
    <div className="pl-[23px]"><HSlider w={103} /></div>
  </Section>
);

const Horizontal = () => (
  <Section title="Horizontal" color="text-[#e27a2c] pr-[3px]">
    <div className={"mt-[4px] h-[18px] pr-[3px] text-center leading-[20px] " + label}>Source</div>
    <div className={"flex h-[17px] pl-[18px] leading-[16px] " + label}>
      <svg width="22" height="14" viewBox="0 0 22 14"><path d="M1 11L18 2.500V12" fill="none" stroke="#d9763a" strokeWidth="1.800" /></svg>
      {sourceLetters}
    </div>
    <div className="pt-[3px] pl-[10px]"><HSlider w={129} /></div>
    <div className={"mt-[5px] h-[21px] pr-[4px] text-center leading-[20px] " + label}>Position</div>
    <svg width="135" height="66" viewBox="0 0 135 66" className="ml-[10px] shrink-0">
      <defs>
        <linearGradient id="hw">
          <stop offset="0" stopColor="#504c4c" /><stop offset=".22" stopColor="#7c7c7c" /><stop offset=".47" stopColor="#f4f4f4" /><stop offset=".53" stopColor="#f0f0f0" /><stop offset=".78" stopColor="#7c7c7c" /><stop offset="1" stopColor="#504c4c" />
        </linearGradient>
      </defs>
      <rect x="1" y="1.500" width="132" height="63" fill="#a8a8aa" stroke="#000" strokeWidth="1.800" />
      <path d="M2.500 63V3H132" fill="none" stroke="#d8d8d8" />
      <path d="M4 11H129" stroke="#e4e4e4" strokeWidth="1.600" />
      <rect x="4" y="12" width="125" height="41" fill="url(#hw)" />
      <path d="M4 53H129.500V12" stroke="#000" strokeWidth="1.500" fill="none" />
      {Array.from({ length: 19 }, (_, i) => {
        const w = (i - 4) % 5 === 0 ? 6 : 3.500;
        return <path key={i} d={`M${4.600 + i * 6.680} 12.500v${w}M${4.600 + i * 6.680} 52v${-w}`} stroke="#333" strokeWidth=".9" />;
      })}
      <g fontFamily="Liberation Sans, sans-serif" fontSize="16.500" fill="#0a0a0a" textAnchor="middle">
        <text x="31" y="38">10</text><text x="64" y="38">0</text><text x="98" y="38">-10</text>
      </g>
      <path d="M57 3H72L64.500 11ZM57 62.500H72L64.500 54.500Z" fill="#fb0606" />
    </svg>
    <div className="mt-auto">
      <Dial id="dh" marks={timeMarks} color="#e2741c" value="0.2" left="mS" right="мS" pointer="M-33 20.700L-19.700 35L-30 32.300Z" />
    </div>
  </Section>
);

/* sampled decay of the captured pulse */
const decay = Array.from({ length: 84 }, (_, i) => {
  const x = 738.300 + i * 4;
  return `L${x.toFixed(1)} ${(461.500 - 55.900 * Math.exp(-(x - 738.300) / 150)).toFixed(1)}`;
}).join("");

const Oscilloscope = () => (
  <div className="absolute top-[100px] left-[448px] flex h-[739px] w-[1152px] flex-col rounded-t-[4px] border-r-2 border-b-2 border-l-[1.500px] border-[#a84dbe] bg-[#a84dbe]">
    <div className="flex h-[31px] shrink-0 items-center pl-[3px]">
      <span className="flex-1 font-['Open_Sans'] text-[14.500px] tracking-[-0.050px] text-[#f6e9f9]">Digital Oscilloscope</span>
      <div className="flex h-[25px] w-[25px] items-center justify-center bg-[#c64f52]">
        <svg width="8" height="8" viewBox="0 0 8 8"><path d="M1 1L7 7M7 1L1 7" stroke="#fff" strokeWidth="1.900" /></svg>
      </div>
    </div>
    <div className="flex min-h-0 flex-1">
      <div className="flex w-[680px] flex-col bg-[#dcdce4]">
        <div className="flex h-[676px] shrink-0 border-t-2 border-r-2 border-b-2 border-l-2 border-t-[#e6e4ec] border-r-[#3e3e52] border-b-[#eeeeee] border-l-[#dccfe6]">
          <svg width="676" height="672" viewBox="451 133 676 672">
            <rect x="451" y="133" width="676" height="672" fill="#3c3c4c" />
            <rect x="453" y="134" width="673" height="671" fill="#b4b8b4" />
            <rect x="455" y="135.500" width="668.500" height="668" fill="#000" />
            <path d="M454.500 135V804" stroke="#333" strokeDasharray="2 2" />
            {Array.from({ length: 19 }, (_, i) => (
              <path key={i} d={`M${Math.round(455 + (i + 1) * 33.420) - .5} 136V803M455 ${Math.round(135.500 + (i + 1) * 33.400) - .5}H1123`} stroke="#0d3312" />
            ))}
            <path d={`M455 464.500L600 463.700L737.500 462.700L738.300 405.600${decay}`} fill="none" stroke="#e8e840" strokeWidth="1.100" />
          </svg>
        </div>
        <div className="flex flex-1 items-center border-t-2 border-b border-[#888] bg-[#f0f0f0]">
          <div className="ml-[23px] h-[14px] w-px bg-[#888]" />
          <div className="ml-[143px] h-[14px] w-[422px] bg-[#868686]" />
        </div>
      </div>
      <div className="grid grid-cols-[157px_157px_157px]">
        <Trigger />
        <Channel name="A" color="#fff200" text="text-[#fff21c]" values={["0", "10", "20"]} shift={6.700} at={0} paired />
        <Channel name="C" color="#e0107c" text="text-[#dd1478]" values={["-50", "-40", "-30"]} at={76} paired />
        <Horizontal />
        <Channel name="B" color="#0e8fdc" text="text-[#1e8ed6]" values={["30", "40", "50"]} at={76} />
        <Channel name="D" color="#0e9640" text="text-[#149044]" values={["-130", "-120", "-110"]} at={76} />
      </div>
    </div>
  </div>
);

/* ---------- chrome ---------- */

const menu: [string, string][] = [
  ["Archivo", "w-[68.500px]"], ["Edición", "w-[66px]"], ["Vista", "w-[50px]"], ["Herramientas", "w-[106px]"], ["Diseño", "w-[64px]"], ["Gráfico", "w-[65.500px]"],
  ["Depuración", "w-[93.500px]"], ["Librería", "w-[66px]"], ["Plantilla", "w-[68.500px]"], ["Sistema", "w-[70px]"], ["Ayuda", "w-[60px]"],
];

const StatusBar = () => (
  <div className="flex h-[38px] shrink-0 items-center bg-linear-to-b from-[#e4f0f8] to-[#b9d8ea]">
    <div className="ml-[4px] h-[34px] w-0 border-l-2 border-dotted border-[#a9bccb]" />
    <svg width="180" height="30" viewBox="6 806 180 30">
      <defs><linearGradient id="bl" x1="0" y1="0" x2="0" y2="1"><stop offset="0" stopColor="#0a6ac0" /><stop offset="1" stopColor="#0505fa" /></linearGradient>
        <linearGradient id="or" x1="0" y1="0" x2="0" y2="1"><stop offset="0" stopColor="#fbd38a" /><stop offset="1" stopColor="#fda50c" /></linearGradient></defs>
      <path d="M18 809V834L43.500 821.500Z" fill="url(#bl)" />
      <path d="M61.500 809H65V834H61.500ZM68.500 809V834L87.500 821.500Z" fill="url(#bl)" />
      <path d="M108.500 809H115.500V834H108.500ZM119.500 809H126.500V834H119.500Z" fill="url(#or)" stroke="#b98a3a" strokeWidth=".8" />
      <rect x="148" y="809" width="26" height="25" fill="url(#bl)" />
      <path d="M185.500 808V835" stroke="#93abbc" />
    </svg>
    <svg width="26" height="26" viewBox="0 0 26 26" className="ml-[9.500px]">
      <circle cx="13" cy="13" r="12.700" fill="#21b42a" />
      <circle cx="13" cy="6" r="2.400" fill="#fff" />
      <path d="M9.500 10.500H15V19.500H17V21H9.500V19.500H11.500V12H9.500Z" fill="#fff" />
    </svg>
    <span className="ml-[6.500px] w-[86px] font-['Liberation_Sans'] text-[14px] tracking-[-0.350px] whitespace-nowrap text-[#111]">2 Message(s)</span>
    <div className="h-full w-[4px] bg-[#d3e1eb]" />
    <div className="ml-[3px] h-[34px] w-0 border-l-2 border-dotted border-[#a9bccb]" />
    <span className="ml-[6px] font-['Liberation_Sans'] text-[13.500px] whitespace-nowrap text-[#8f6636]">PAUSED: 00:00:23.</span>
  </div>
);

const Task = ({ cls, children, dot }: { cls: string; children: React.ReactNode; dot?: boolean }) => (
  <div className={"flex h-full shrink-0 flex-col items-center pt-[14px] " + cls}>
    <svg width="32" height="32" viewBox="0 0 32 32" className="shrink-0 overflow-visible">{children}</svg>
    {dot && <div className="mt-[4px] h-[4px] w-[7px] rounded-full bg-[#9a9a9a]" />}
  </div>
);

const Taskbar = () => (
  <div className="flex h-[59px] shrink-0 items-start border-t border-[#35363c] bg-[#1c1c1c] font-['Open_Sans'] text-white">
    <div className="w-[20px] shrink-0" />
    <svg width="46" height="59" viewBox="20 841 46 59" className="shrink-0">
      <circle cx="50" cy="870" r="6" fill="#f0873a" />
      <path d="M32 884C23 884 22 873 31 872C32 862 47 862 48 871C58 871 58 884 50 884Z" fill="#9dbcf2" />
      <path d="M30 884C24 883 24 876 31 877C36 871 44 874 46 879C54 878 56 883 51 884Z" fill="#7ba4ea" />
      <circle cx="48.500" cy="859" r="10" fill="#fa949e" />
      <text x="48.500" y="864" fontSize="13" textAnchor="middle" fontFamily="Open Sans, sans-serif" fill="#222">1</text>
    </svg>
    <svg width="30" height="30" viewBox="0 0 30 30" className="mt-[14.500px] ml-[115px] shrink-0">
      <defs><linearGradient id="win" x1="0" y1="0" x2="1" y2="1"><stop offset="0" stopColor="#8fe3ff" /><stop offset="1" stopColor="#0a9af0" /></linearGradient></defs>
      <path d="M1 1H14.300V14.300H1ZM15.700 1H29V14.300H15.700ZM1 15.700H14.300V29H1ZM15.700 15.700H29V29H15.700Z" fill="url(#win)" />
    </svg>
    <div className="mt-[9px] ml-[17px] flex h-[40px] w-[274px] shrink-0 items-center rounded-full border border-[#555] bg-[#3a3a3a] pl-[13px]">
      <svg width="22" height="22" viewBox="0 0 22 22"><circle cx="10" cy="9" r="6.500" fill="none" stroke="#ddd" strokeWidth="1.800" /><path d="M14.500 14L19.500 20" stroke="#ddd" strokeWidth="2.200" /></svg>
      <span className="ml-[10px] flex-1 text-[17px] tracking-[-0.450px] text-[#d0d0d0]">Búsqueda</span>
      <svg width="66" height="32" viewBox="0 0 66 32" className="mr-px">
        <defs><clipPath id="pill"><rect width="66" height="32" rx="15" /></clipPath></defs>
        <g clipPath="url(#pill)">
          <rect width="66" height="32" fill="#f2b85a" />
          <path d="M6 4L10 1H56L60 4V7H6Z" fill="#8a4a2a" />
          <rect x="8" y="6" width="50" height="12" fill="#c8432f" />
          <path d="M17 9H20V13H17ZM28 9H31V13H28ZM39 9H42V13H39ZM49 9H52V13H49Z" fill="#5d1510" />
          <path d="M6 17H60V20H6Z" fill="#7a3a20" />
          <path d="M0 20H66V32H0Z" fill="#2fb4e6" />
          <path d="M31 17H37L38 27H30Z" fill="#c8ab90" />
          <path d="M8 24C20 19 46 30 58 23M10 30C24 26 40 31 54 28" stroke="#bfeafa" strokeWidth="1.500" fill="none" />
          <path d="M0 20C16 18 14 28 4 32H0ZM66 20C50 18 52 28 60 32H66Z" fill="#9a8a2c" />
          <path d="M0 0H4C13 3 11 12 8 22H0ZM66 0H60C53 4 55 14 58 22H66Z" fill="#e3c424" />
        </g>
      </svg>
    </div>
    <Task cls="ml-[15px] w-[32px]">
      <rect x="9" y="1" width="22" height="21" rx="1" fill="#f2f2f2" /><rect x="1" y="9" width="22" height="20" rx="1" fill="#6d6d6d" /><rect x="9" y="9" width="14" height="13" fill="#b8b8b8" />
    </Task>
    <Task cls="ml-[22px] w-[32px]">
      <circle cx="18" cy="7" r="5" fill="#7b83eb" /><circle cx="27" cy="7" r="3.500" fill="#5059c9" />
      <path d="M23 12H31V20C31 25 27 27 23 25Z" fill="#5059c9" /><path d="M10 12H25V22C25 31 11 32 10 22Z" fill="#7b83eb" />
      <rect x="1" y="9" width="15" height="15" rx="1.500" fill="#4b53bc" /><path d="M5 13H12M8.500 13V20.500" stroke="#fff" strokeWidth="2" />
    </Task>
    <Task cls="ml-[23px] w-[32px]">
      <path d="M3 1L16 9L29 1V24L16 31L3 24ZM9 11.500V20.500L16 24.500L23 20.500V11.500L16 15.500Z" fill="#c4262c" fillRule="evenodd" />
    </Task>
    <Task cls="ml-[23px] w-[32px]">
      <defs><linearGradient id="cpa" x1="0" y1="0" x2="0" y2="1"><stop offset="0" stopColor="#168cf0" /><stop offset=".6" stopColor="#39c48c" /><stop offset="1" stopColor="#e8d22c" /></linearGradient>
        <linearGradient id="cpb" x1="0" y1="0" x2="0" y2="1"><stop offset="0" stopColor="#b060f0" /><stop offset=".5" stopColor="#f0569a" /><stop offset="1" stopColor="#fda03a" /></linearGradient></defs>
      <path d="M10 2H19C23 2 22 7 24 9H17C13 9 13 22 10 24H5C0 24 1 18 2 14C4 8 5 2 10 2Z" fill="url(#cpa)" />
      <path d="M22 30H13C9 30 10 25 8 23H15C19 23 19 10 22 8H27C32 8 31 14 30 18C28 24 27 30 22 30Z" fill="url(#cpb)" />
    </Task>
    <Task cls="ml-[23px] w-[32px]" dot>
      <rect x="1" y="0" width="23" height="25" rx="2" fill="#f3f3f3" /><rect x="4.500" y="4" width="13" height="14" fill="none" stroke="#d3402c" strokeWidth="3" strokeDasharray="3 1.500" />
      <path d="M20 6V22M10 20H24" stroke="#999" strokeWidth="3.500" /><circle cx="27.500" cy="16.500" r="3" fill="none" stroke="#2fa4e8" strokeWidth="2" /><circle cx="17.500" cy="27.500" r="3" fill="none" stroke="#2fa4e8" strokeWidth="2" /><path d="M19.500 25L25 19" stroke="#2fa4e8" strokeWidth="2" />
    </Task>
    <Task cls="ml-[23px] w-[32px]" dot>
      <circle cx="16" cy="17" r="14.500" fill="#e33b2e" /><path d="M16 17L3.500 10A14.500 14.500 0 0 0 14 31.300L22 20Z" fill="#2ba24c" /><path d="M16 17L14 31.500A14.500 14.500 0 0 0 29 10.500H16Z" fill="#fcc934" />
      <circle cx="16" cy="17" r="7" fill="#fff" /><circle cx="16" cy="17" r="5.500" fill="#3b7ded" />
      <circle cx="27" cy="5" r="9.500" fill="#8a8078" /><path d="M20 7C19 -3 31 -5 35 2L30 3L27 13C22 13 20 11 20 7Z" fill="#2a2422" /><ellipse cx="29" cy="6" rx="3" ry="4" fill="#d9b8a0" /><path d="M29 10L35 8L32 13L27 14.500Z" fill="#e8e4e0" />
    </Task>
    <Task cls="ml-[23.500px] w-[32px]">
      <path d="M5 10L19 2L31 10V28H7Z" fill="#1e76c8" /><path d="M11 10L23 3L31 11V27H12Z" fill="#5cc0f4" /><path d="M8 28L31 13V28Z" fill="#2a98e4" /><rect x="1" y="10" width="15" height="15" rx="1.500" fill="#0f5fb0" /><ellipse cx="8.500" cy="17.500" rx="3" ry="3.800" fill="none" stroke="#fff" strokeWidth="2" />
    </Task>
    <Task cls="ml-[23px] w-[32px]">
      <defs>
        <linearGradient id="edg" x1="0" y1=".6" x2="1" y2=".3"><stop offset="0" stopColor="#1a8fdc" /><stop offset=".5" stopColor="#2bb8dc" /><stop offset="1" stopColor="#62dc5a" /></linearGradient>
        <linearGradient id="edb" x1="0" y1="0" x2="1" y2="1"><stop offset="0" stopColor="#1780d8" /><stop offset="1" stopColor="#0d4a9c" /></linearGradient>
      </defs>
      <path d="M1 16C1 -4 31 -4 31 14C31 21 22 22 19.500 19.500C22 16 20 9 12 9C6 9 1 13 1 16Z" fill="url(#edg)" />
      <path d="M1 15.500C2 9 15 7 18.500 13C13 11 10 17 13 21.500C16 27 24 27 29 23.500C25 30 19 31 15.500 31C6 31 .5 23.500 1 15.500Z" fill="url(#edb)" />
    </Task>
    <Task cls="ml-[23px] w-[32px]">
      <path d="M1 4C1 3 2 2 3 2H11L14 5H29C30 5 31 6 31 7V12H1Z" fill="#e5a016" /><path d="M1 9H31V28C31 29 30 29 29 29H3C2 29 1 29 1 28Z" fill="#fcd354" /><path d="M6 29V23C6 21 7 20 9 20H23C25 20 26 21 26 23V29Z" fill="#1d7fd0" /><path d="M11 24.500H21" stroke="#0b4e92" strokeWidth="2" />
    </Task>
    <Task cls="ml-[23px] w-[32px]">
      <defs>
        <linearGradient id="ma" x1="0" y1="0" x2="0" y2="1"><stop offset="0" stopColor="#e0b8f4" /><stop offset="1" stopColor="#8a5fe0" /></linearGradient>
        <linearGradient id="mb" x1="0" y1="0" x2="1" y2="1"><stop offset="0" stopColor="#3f6fe0" /><stop offset="1" stopColor="#58c0f8" /></linearGradient>
      </defs>
      <path d="M16 1L20 3V10L11 14V21L13 24L8 26L3 22V9Z" fill="url(#ma)" /><path d="M18 1.500L29 8V20L22 19V13L15 9V4Z" fill="url(#mb)" /><path d="M29 15V23L16 31L5 24L11 22L16 23L22 19Z" fill="#8f62dc" />
    </Task>
    <div className="mt-[4px] ml-[15px] flex h-[50px] w-[49px] shrink-0 flex-col items-center rounded-[5px] border border-[#343436] bg-[#2a2a2b] pt-[9px]">
      <Atom size={28} dark />
      <div className="mt-[7px] h-[4px] w-[20px] shrink-0 rounded-full bg-[#d79be0]" />
    </div>
    <svg width="132" height="58" viewBox="1174 841 132 58" className="ml-[67px] shrink-0">
      <path d="M1197 874L1203 867L1209 874" fill="none" stroke="#fff" strokeWidth="1.600" />
      <path d="M1238.500 861L1243 864L1238.500 867L1234 864ZM1247.500 861L1252 864L1247.500 867L1243 864ZM1238.500 867L1243 870L1238.500 873L1234 870ZM1247.500 867L1252 870L1247.500 873L1243 870ZM1247.500 874L1250 875.500L1247.500 877L1245.500 875.500Z" fill="#fff" />
      <rect x="1233" y="869" width="11" height="11" rx="2" fill="#d9152c" />
      <text x="1238.500" y="878" fontSize="9.500" fontWeight="700" textAnchor="middle" fill="#fff" fontFamily="Open Sans, sans-serif">3</text>
      <rect x="1280" y="861" width="6.500" height="11" rx="3.200" fill="none" stroke="#c98ad2" strokeWidth="1.500" />
      <path d="M1277 869C1277 877 1289.500 877 1289.500 869M1283.200 875V880" fill="none" stroke="#c98ad2" strokeWidth="1.500" />
    </svg>
    <div className="mt-[10px] w-[50px] shrink-0 text-center text-[14px] leading-[19.500px] tracking-[-0.100px]">ESP<br />LAA</div>
    <svg width="92" height="58" viewBox="1363 841 92 58" className="ml-[7px] shrink-0">
      <g fill="none" stroke="#fff" strokeWidth="1.600">
        <path d="M1368.500 868C1374 861 1382 861 1387.500 868M1371.500 871C1375 866.500 1381 866.500 1384.500 871M1374.500 873.800C1376.500 871 1379.500 871 1381.500 873.800" />
        <path d="M1399 867V873H1402L1407 877.500V862.500L1402 867Z" strokeWidth="1.400" />
        <path d="M1410 867C1411.500 869 1411.500 871 1410 873" /><path d="M1413 864C1416 868 1416 872 1413 876" stroke="#777" />
      </g>
      <circle cx="1378" cy="875.500" r="1.600" fill="#fff" />
      <path d="M1437 864.500H1443C1445.500 864.500 1445.500 865 1445.500 867V873C1445.500 876.500 1445.500 876.500 1443 876.500H1434Z" fill="#1c1c1c" stroke="#fff" strokeWidth="1.500" /><path d="M1446 868.500H1448V873H1446" fill="#fff" />
      <path d="M1431 874V872C1426 869 1429 864 1435 861C1439 867 1437 873 1433 873.500L1429 877Z" fill="#fff" /><path d="M1436 869L1444 874.500V876H1436Z" fill="#fff" />
    </svg>
    <div className="mt-[9px] w-[91px] shrink-0 text-right text-[14px] leading-[20px] tracking-[0.050px] whitespace-nowrap">11:01<br />29/09/2024</div>
    <svg width="20" height="22" viewBox="0 0 20 22" className="mt-[18px] ml-[9px] shrink-0">
      <path d="M2.500 16H17.500L15.500 12.500V8C15.500 0 4.500 0 4.500 8V12.500ZM8 18.500C8.500 20 11.500 20 12 18.500" fill="none" stroke="#fff" strokeWidth="1.500" />
    </svg>
  </div>
);

export default function App() {
  return (
    <div className="relative flex h-[899px] w-[1600px] flex-col overflow-hidden bg-[#e1e9ef]">
      <div className="flex h-[28px] shrink-0 items-center bg-[#f3f3f3]">
        <div className="ml-[1px]"><Atom size={20} /></div>
        <span className="ml-[5px] flex-1 pt-[1px] font-['Open_Sans'] text-[14.500px] tracking-[-0.100px] text-[#8f8f8f]">Nuevo proyecto - Proteus 8 Professional - Esquema electrónico</span>
        <svg width="150" height="28" viewBox="1440 0 150 28" className="mr-[10px]">
          <g fill="none" stroke="#8a8a8a" strokeWidth="1.100">
            <path d="M1448 14H1460" /><rect x="1505.500" y="10.500" width="9" height="9" rx="1.500" /><path d="M1508 8.500H1514.500Q1516.500 8.500 1516.500 10.500V17.500" />
            <path d="M1564.500 8L1576.500 20M1576.500 8L1564.500 20" />
          </g>
        </svg>
      </div>
      <div className="flex h-[24px] shrink-0 items-center bg-white pt-[2px] pl-[9.500px] font-['Open_Sans'] text-[14px] tracking-[-0.200px] text-[#737373]">
        {menu.map(([m, w]) => <span key={m} className={"shrink-0 whitespace-nowrap " + w}>{m}</span>)}
      </div>
      <div className="flex h-[40px] shrink-0 bg-[#e8f0f6]">
        <Band cls="w-[504px] shrink-0" items="new open save exit | home schematic chip visual explorer pcb bom code notes | help" />
        <Band cls="ml-[4px] w-[298px] shrink-0" active="grid" items="refresh grid | origin | pan zoomin zoomout zoomall zoomarea" />
        <Band cls="ml-[3px] w-[476px] shrink-0" items="undo redo | cut copy paste | blockcopy blockmove blockrotate blockdelete | pick make package hammer" />
        <Band cls="ml-[4px] w-[270px] shrink-0" active="autoroute" items="autoroute | find props | addsheet delsheet sheets | erc" />
      </div>
      <div className="flex h-[34px] shrink-0">
        <svg width="448" height="34" viewBox="0 92 448 34">
          <defs><linearGradient id="tab" x1="0" y1="0" x2="0" y2="1"><stop offset="0" stopColor="#e9f4fb" /><stop offset="1" stopColor="#b5d7eb" /></linearGradient></defs>
          <rect y="121.500" width="448" height="5" fill="#bcdaed" />
          <path d="M224 122H448" stroke="#86a9c2" />
          <path d="M-1 127V116L22 93.500H220.500V127Z" fill="url(#tab)" />
          <path d="M-1 116L22 93.500H220.500V122H224" fill="none" stroke="#86a9c2" />
          <g transform="translate(21 96) scale(.78)">{icons.schematic}</g>
          <text x="45.500" y="112.500" fontSize="13.900" fontWeight="700" fontFamily="Liberation Sans, sans-serif" fill="#28506e">Esquema electrónico</text>
          <path d="M199.500 102.500L210.500 113.500M210.500 102.500L199.500 113.500" stroke="#666" strokeWidth="2.300" />
        </svg>
      </div>
      <div className="flex h-[676px] shrink-0 overflow-hidden">
        <ModeBar />
        <RotateBar />
        <Picker />
        <Schematic />
      </div>
      <StatusBar />
      <Taskbar />
      <Oscilloscope />
    </div>
  );
}
